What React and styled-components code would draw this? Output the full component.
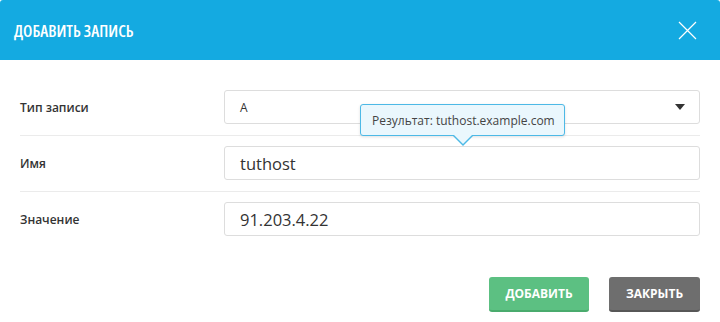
import React from "react";
import styled, { createGlobalStyle } from "styled-components";

const Global = createGlobalStyle`
  html, body { margin: 0; padding: 0; background: #ffffff; }
  body { font-family: "Open Sans", "Noto Sans", sans-serif; color: #333; }
  * { box-sizing: border-box; }
`;

const Modal = styled.div`
  width: 720px;
  height: 322px;
  background: #fff;
  display: flex;
  flex-direction: column;
`;

const Header = styled.div`
  height: 60px;
  background: #14aae1;
  display: flex;
  align-items: center;
  justify-content: space-between;
  padding: 0 23px 0 14px;
  border-radius: 3px 3px 0 0;
`;

const Title = styled.h2`
  margin: 0;
  color: #fff;
  font-size: 16.5px;
  font-weight: 600;
  font-stretch: 75%;
  letter-spacing: 0;
  line-height: 1;
  padding-top: 2px;
`;

const CloseBtn = styled.button`
  width: 20px;
  height: 20px;
  padding: 0;
  border: 0;
  background: transparent;
  display: flex;
  align-items: center;
  justify-content: center;
  cursor: pointer;
`;

const Body = styled.div`
  padding: 20px 20px 0 20px;
  display: flex;
  flex-direction: column;
`;

const Row = styled.div`
  display: grid;
  grid-template-columns: 204px 1fr;
  align-items: center;
  padding: 10px 0 11px;
  border-bottom: ${(p) => (p.$last ? "none" : "1px solid #ebebeb")};
`;

const Label = styled.label`
  font-size: 12px;
  font-weight: 600;
  color: #333;
`;

const ControlWrap = styled.div`
  position: relative;
`;

const Field = styled.div`
  height: 34px;
  border: 1px solid #dddddd;
  border-radius: 3px;
  background: #fff;
  display: flex;
  align-items: center;
  justify-content: space-between;
  padding: 0 14px 0 15px;
  font-size: ${(p) => (p.$small ? "12px" : "16.5px")};
  color: #333;
`;

const Caret = styled.span`
  width: 0;
  height: 0;
  border-left: 5.5px solid transparent;
  border-right: 5.5px solid transparent;
  border-top: 6px solid #333;
`;

const Tooltip = styled.div`
  position: absolute;
  left: 136px;
  top: 14px;
  width: 205px;
  height: 32px;
  background: #eaf7fd;
  border: 1px solid #4db9e6;
  border-radius: 3px;
  box-shadow: 0 1px 3px rgba(0, 0, 0, 0.12);
  font-size: 12px;
  color: #444;
  display: flex;
  align-items: center;
  padding: 0 11px;
  white-space: nowrap;
  z-index: 2;

  &::before,
  &::after {
    content: "";
    position: absolute;
    left: 92px;
    width: 0;
    height: 0;
    border-left: 10px solid transparent;
    border-right: 10px solid transparent;
  }
  &::before {
    top: 31px;
    border-top: 10px solid #4db9e6;
  }
  &::after {
    top: 30px;
    left: 93px;
    border-left-width: 9px;
    border-right-width: 9px;
    border-top: 9px solid #eaf7fd;
  }
`;

const Footer = styled.div`
  display: flex;
  justify-content: flex-end;
  gap: 20px;
  padding: 30px 20px 0 20px;
`;

const Button = styled.button`
  height: 35px;
  padding: 0 16px;
  border: 0;
  border-radius: 3px;
  border-bottom: 2px solid ${(p) => (p.$variant === "primary" ? "#4aab6d" : "#575757")};
  background: ${(p) => (p.$variant === "primary" ? "#5cc082" : "#6e6e6e")};
  color: #fff;
  font-family: "Open Sans", "Noto Sans", sans-serif;
  font-size: 12px;
  font-weight: 700;
  min-width: ${(p) => p.$w}px;
  cursor: pointer;
`;

export default function App() {
  return (
    <>
      <Global />
      <Modal>
        <Header>
          <Title>ДОБАВИТЬ ЗАПИСЬ</Title>
          <CloseBtn aria-label="close">
            <svg width="19" height="19" viewBox="0 0 19 19">
              <path d="M1 1 L18 18 M18 1 L1 18" stroke="#fff" strokeWidth="1.2" fill="none" />
            </svg>
          </CloseBtn>
        </Header>
        <Body>
          <Row>
            <Label>Тип записи</Label>
            <ControlWrap>
              <Field $small>
                <span>A</span>
                <Caret />
              </Field>
              <Tooltip>Результат: tuthost.example.com</Tooltip>
            </ControlWrap>
          </Row>
          <Row>
            <Label>Имя</Label>
            <ControlWrap>
              <Field>tuthost</Field>
            </ControlWrap>
          </Row>
          <Row $last>
            <Label>Значение</Label>
            <ControlWrap>
              <Field>91.203.4.22</Field>
            </ControlWrap>
          </Row>
        </Body>
        <Footer>
          <Button $variant="primary" $w={100}>ДОБАВИТЬ</Button>
          <Button $w={91}>ЗАКРЫТЬ</Button>
        </Footer>
      </Modal>
    </>
  );
}
